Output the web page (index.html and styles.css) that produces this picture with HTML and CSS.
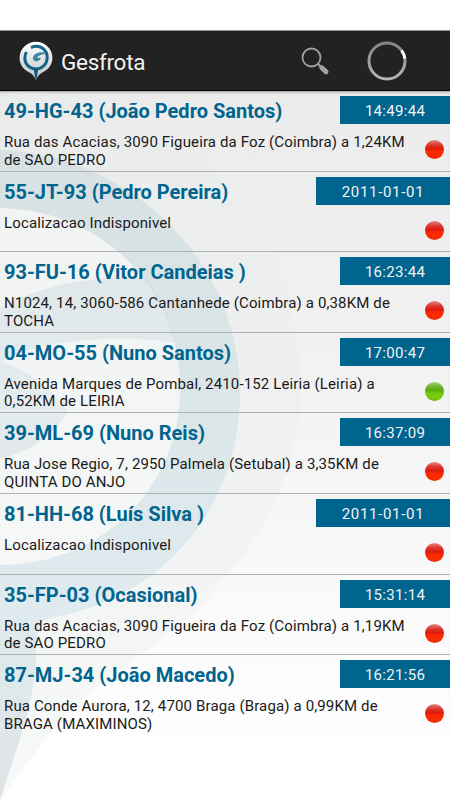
FILE: index.html
```html
<!DOCTYPE html>
<html lang="pt">
<head>
  <meta charset="utf-8">
  <title>Gesfrota</title>
  <link rel="stylesheet" href="styles.css">
</head>
<body>
  <header class="action_bar">
    <svg class="logo" width="34" height="40" viewBox="0 0 34 40" fill="none">
      <defs>
        <linearGradient id="pin" x1="0" y1="0" x2="0" y2="1">
          <stop offset="0" stop-color="#fff"/>
          <stop offset="1" stop-color="#bfc4c6"/>
        </linearGradient>
      </defs>
      <path d="M17 .8C8 .8 .6 8 .6 17c0 7 4.200 12 10.200 14.700 3 1.500 4.500 3.800 6.200 7.300 1.500-3.500 3-5.800 6-7.300C29 29 33.400 24 33.400 17 33.400 8 26 .8 17 .8z" fill="url(#pin)"/>
      <path d="M12 6.600C21 2.500 28.500 9 28.200 17c-.2 6-5 11-11.200 11S5.800 23.500 5.800 17c0-2.500.7-4.500 1.700-6" stroke="#17658a" stroke-width="3"/>
      <path d="M14.800 28h4.400L17.600 38h-1.200z" fill="#12557a"/>
      <path d="M25.500 11.500c-5-.8-9 .6-10.800 3.200-1.300 2-.9 4.300 1 5.300 2.200 1 5.300-.2 6.300-3.200l-4 .2c1.500-2.500 4.200-3.700 7.500-3.700z" fill="#3d86a8"/>
    </svg>
    <h1 class="app_name">Gesfrota</h1>
    <svg class="search" width="29" height="29" viewBox="0 0 29 29" fill="none" stroke="#a2a2a2">
      <circle cx="10.500" cy="10.500" r="9" stroke-width="1.800"/>
      <path d="M16.800 16.800l3 3" stroke-width="2.200"/>
      <path d="M20.800 20.800l4.200 4" stroke-width="5" stroke-linecap="round"/>
    </svg>
    <svg class="spinner" width="40" height="40" viewBox="0 0 40 40" fill="none">
      <defs>
        <linearGradient id="spin" x1="0" y1="0" x2="0" y2="1">
          <stop offset="0" stop-color="#858585"/>
          <stop offset="1" stop-color="#b4b4b4"/>
        </linearGradient>
      </defs>
      <circle cx="20" cy="20" r="18" stroke="url(#spin)" stroke-width="3"/>
      <path d="M34.600 9.500A18 18 0 0 1 37.800 17.500" stroke="#fff" stroke-width="3"/>
    </svg>
  </header>

  <main class="content">
    <!-- faded pin behind the list -->
    <svg class="watermark" width="450" height="709" viewBox="0 91 450 709">
      <defs>
        <linearGradient id="ring" x1="0" y1="0" x2="0" y2="1">
          <stop offset="0" stop-color="#cddbdf"/>
          <stop offset=".7" stop-color="#d4e5eb"/>
          <stop offset="1" stop-color="#d2d8dc"/>
        </linearGradient>
      </defs>
      <path d="M0 93C160 80 300 210 300 385C300 520 210 610 105 680C60 715 25 765 0 800z" fill="#e8eeee" fill-opacity=".35"/>
      <path d="M0 208C105 210 180 290 180 388C180 490 100 565 0 565z" fill="#fff" fill-opacity=".3"/>
      <path d="M0 150C130 155 240 260 240 393C240 510 160 600 50 618C38 621 36 630 36 660C33 710 14 755 0 800V565C100 565 180 490 180 388C180 290 105 210 0 208z" fill="url(#ring)" fill-opacity=".65"/>
      <path d="M0 308C40 285 95 275 145 278C163 300 172 320 175 343C140 337 95 338 68 342C40 346 20 350 0 362C25 368 52 388 68 412C50 438 25 455 0 458z" fill="url(#ring)" fill-opacity=".5"/>
    </svg>
    <ul class="vehicles">
      <li class="vehicle">
        <h2 class="plate">49-HG-43 (João Pedro Santos)</h2>
        <time class="stamp">14:49:44</time>
        <p class="address">Rua das Acacias, 3090 Figueira da Foz (Coimbra) a 1,24KM<br>de SAO PEDRO</p>
        <i class="status"></i>
      </li>
      <li class="vehicle">
        <h2 class="plate">55-JT-93 (Pedro Pereira)</h2>
        <time class="stamp date">2011-01-01</time>
        <p class="address">Localizacao Indisponivel</p>
        <i class="status"></i>
      </li>
      <li class="vehicle">
        <h2 class="plate">93-FU-16 (Vitor Candeias )</h2>
        <time class="stamp">16:23:44</time>
        <p class="address">N1024, 14, 3060-586 Cantanhede (Coimbra) a 0,38KM de<br>TOCHA</p>
        <i class="status"></i>
      </li>
      <li class="vehicle">
        <h2 class="plate">04-MO-55 (Nuno Santos)</h2>
        <time class="stamp">17:00:47</time>
        <p class="address">Avenida Marques de Pombal, 2410-152 Leiria (Leiria) a<br>0,52KM de LEIRIA</p>
        <i class="status online"></i>
      </li>
      <li class="vehicle">
        <h2 class="plate">39-ML-69 (Nuno Reis)</h2>
        <time class="stamp">16:37:09</time>
        <p class="address">Rua Jose Regio, 7, 2950 Palmela (Setubal) a 3,35KM de<br>QUINTA DO ANJO</p>
        <i class="status"></i>
      </li>
      <li class="vehicle">
        <h2 class="plate">81-HH-68 (Luís Silva )</h2>
        <time class="stamp date">2011-01-01</time>
        <p class="address">Localizacao Indisponivel</p>
        <i class="status"></i>
      </li>
      <li class="vehicle">
        <h2 class="plate">35-FP-03 (Ocasional)</h2>
        <time class="stamp">15:31:14</time>
        <p class="address">Rua das Acacias, 3090 Figueira da Foz (Coimbra) a 1,19KM<br>de SAO PEDRO</p>
        <i class="status"></i>
      </li>
      <li class="vehicle">
        <h2 class="plate">87-MJ-34 (João Macedo)</h2>
        <time class="stamp">16:21:56</time>
        <p class="address">Rua Conde Aurora, 12, 4700 Braga (Braga) a 0,99KM de<br>BRAGA (MAXIMINOS)</p>
        <i class="status"></i>
      </li>
    </ul>
  </main>
</body>
</html>
```
FILE: styles.css
```css
*, ::before, ::after {
  box-sizing: border-box;
  margin: 0; padding: 0;
}

body {
  width: 450px; height: 800px;
  padding-top: 30px;
  overflow: hidden;
  background: #fff;
  font-family: Roboto, "Liberation Sans", sans-serif;
}

.action_bar {
  display: flex;
  align-items: center;
  height: 61px;
  padding: 0 43px 0 19px;
  background: #222;
  border-top: 1px solid #8a8f8f;
  border-bottom: 1px solid #000;
}
.app_name {
  margin-left: 8px;
  padding-top: 2px;
  color: #f3f3f3;
  font-size: 22.5px; font-weight: 400;
  letter-spacing: -.3px;
}
.search {
  margin: 2px 0 0 auto;
}
.spinner {
  margin-left: 37px;
}

.content {
  position: relative;
  height: 709px;
  background: linear-gradient(#ebebeb, #f3f3f3 45%, #fff 95%);
  box-shadow: inset 0 3px 3px -2px #999;
}
.watermark {
  position: absolute;
  top: 0; left: 0;
}

.vehicles {
  position: relative;
  list-style: none;
}
.vehicle {
  display: grid;
  grid-template-columns: 1fr auto;
  grid-template-rows: 33px 1fr;
  height: 80.6px;
  padding-top: 5px;
  border-bottom: 1px solid #b0b0b0;
}
.vehicle:last-child {
  border-bottom: 0;
}
.plate {
  padding-left: 4px;
  color: #00658e;
  font-size: 20px; font-weight: 700;
  line-height: 30px;
  white-space: nowrap;
}
.stamp {
  width: 110px; height: 28px;
  background: #00658e;
  color: #f2f2f2;
  font-size: 15px;
  line-height: 30px;
  letter-spacing: .3px;
  text-align: center;
  justify-self: end;
}
.stamp.date {
  width: 134px;
  letter-spacing: .7px;
}
.address {
  grid-column: 1 / 3; grid-row: 2;
  padding: 5px 0 0 4px;
  color: #1a1a1a;
  font-size: 15px;
  line-height: 17.6px;
  letter-spacing: .14px;
  white-space: nowrap;
}
.status {
  grid-column: 2; grid-row: 2;
  justify-self: end;
  width: 19px; height: 19px;
  margin: 11px 6px 0 0;
  border-radius: 50%;
  background: linear-gradient(#e98585 0, #db3a30 25%, #dd1a0c 45%, #fa2a00 60%, #fa2b00 85%, #e03010 100%);
}
.status.online {
  background: linear-gradient(#a4d478 0, #6db52c 25%, #5cac0a 45%, #74c80e 60%, #7bcb14 85%, #66b010 100%);
}
```
